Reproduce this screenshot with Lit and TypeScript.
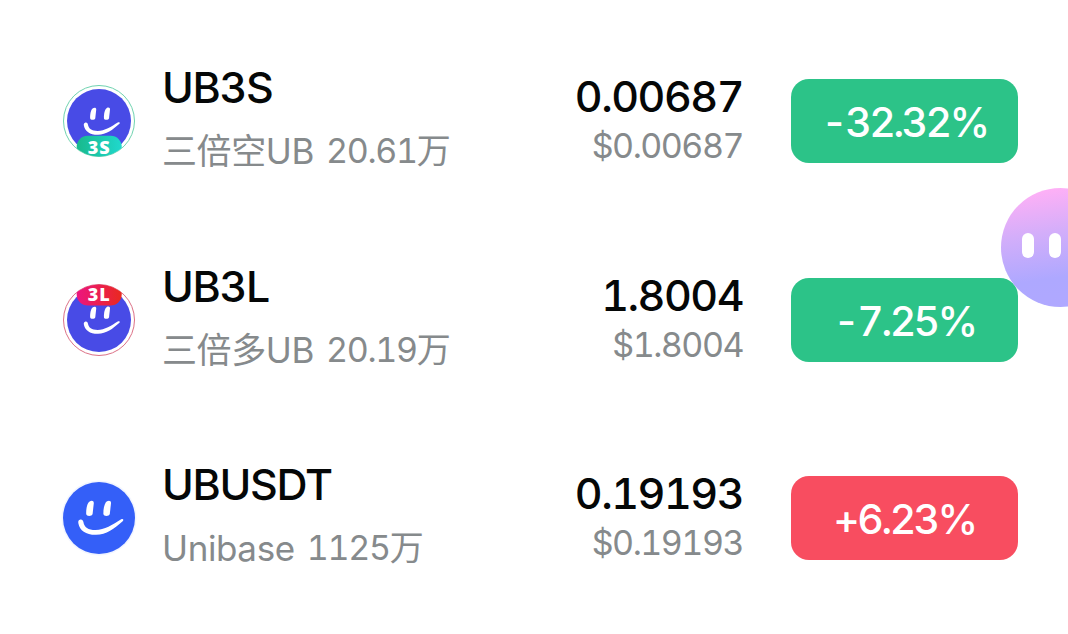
import { LitElement, html, css, svg, nothing } from 'lit';
import { customElement, property } from 'lit/decorators.js';
import { classMap } from 'lit/directives/class-map.js';

type Badge = 'short' | 'long' | '';

interface Ticker {
  symbol: string;
  name: string;
  volume: string;
  price: string;
  usd: string;
  change: string;
  badge: Badge;
}

const TICKERS: Ticker[] = [
  { symbol: 'UB3S', name: '三倍空UB', volume: '20.61万', price: '0.00687', usd: '$0.00687', change: '-32.32%', badge: 'short' },
  { symbol: 'UB3L', name: '三倍多UB', volume: '20.19万', price: '1.8004', usd: '$1.8004', change: '-7.25%', badge: 'long' },
  { symbol: 'UBUSDT', name: 'Unibase', volume: '1125万', price: '0.19193', usd: '$0.19193', change: '+6.23%', badge: '' }
];

@customElement('coin-icon')
export class CoinIcon extends LitElement {
  @property({ type: String }) badge: Badge = '';

  static styles = css`
    :host {
      display: block;
      width: 76px;
      height: 76px;
    }

    svg {
      display: block;
    }

    text {
      font-family: "Open Sans", "Noto Sans", sans-serif;
      font-size: 18px;
      font-weight: 800;
      letter-spacing: 1px;
    }
  `;

  private renderFace() {
    return svg`
      <g fill="#fff">
        <path d="M28.6 21.6C30.6 20.2 33 20.8 32.8 23.2L31.6 34C31.2 36.4 25.4 36.8 25.2 34C25 29 26 23.4 28.6 21.6Z" />
        <path d="M46 21.2C48.2 20 50.2 20.8 50 23.2L48.8 34C48.4 36.4 42.6 36.8 42.4 34C42.2 29 43.4 22.8 46 21.2Z" />
        <path d="M18.8 39.8C20.6 39 22 40 22.4 42C23.4 47.4 27 50 34.6 50C43.4 50 51.6 44.6 60.2 39.2C62.4 38.2 63 40 61.4 41.4C53.4 48.6 45 55 34.6 54.8C24.6 54.6 18.8 50.4 17.4 43.4C17 41.6 17.4 40.4 18.8 39.8Z" />
      </g>
    `;
  }

  private renderBadge() {
    const isShort = this.badge === 'short';
    return svg`
      <g clip-path="url(#disc)">
        <rect x="15.7" y="${isShort ? 52.7 : -5}" width="45" height="28.5" rx="11" fill="url(#${this.badge}-grad)" />
      </g>
      <text x="38.2" y="${isShort ? 71 : 19.2}" text-anchor="middle" fill="#fff">${isShort ? '3S' : '3L'}</text>
    `;
  }

  render() {
    const leveraged = this.badge !== '';
    return html`
      <svg width="76" height="76" viewBox="0 0 76 76">
        <defs>
          <clipPath id="disc"><circle cx="38" cy="38" r="35.5" /></clipPath>
          <linearGradient id="short-grad">
            <stop offset="0%" stop-color="#18b98c" />
            <stop offset="100%" stop-color="#20d8cd" />
          </linearGradient>
          <linearGradient id="long-grad">
            <stop offset="0%" stop-color="#ec1580" />
            <stop offset="100%" stop-color="#e9291f" />
          </linearGradient>
        </defs>
        ${leveraged ? svg`
          <circle cx="38" cy="38" r="35.5" fill="#fff" stroke="${this.badge === 'short' ? '#6fd3b0' : '#dc7187'}" stroke-width="1" />
          <circle cx="38" cy="38" r="32" fill="#484be6" />
          <g transform="translate(9 8) scale(0.8)">${this.renderFace()}</g>
          ${this.renderBadge()}
        ` : svg`
          <circle cx="38" cy="38" r="37.5" fill="#f1f5ff" />
          <circle cx="38" cy="38" r="36" fill="#345ff8" />
          ${this.renderFace()}
        `}
      </svg>
    `;
  }
}

@customElement('ticker-row')
export class TickerRow extends LitElement {
  @property({ type: Object }) ticker?: Ticker;

  static styles = css`
    :host {
      display: flex;
      align-items: center;
      height: 198.33px;
      padding: 0 50px 0 61px;
      box-sizing: border-box;
      font-family: Inter, "Liberation Sans", "Noto Sans CJK SC", sans-serif;
      font-variant-numeric: tabular-nums;
      white-space: nowrap;
    }

    .info {
      flex: 1;
      padding: 0 0 4.5px 25px;
    }

    .symbol {
      font-size: 43px;
      font-weight: 500;
      line-height: 64px;
      letter-spacing: -1.3px;
      color: #050707;
    }

    .detail {
      display: flex;
      gap: 12px;
      line-height: 64px;
      color: #868a8c;
    }

    .name {
      font-size: 35px;
      letter-spacing: -0.4px;
    }

    .volume {
      font-size: 34px;
      letter-spacing: -1.3px;
    }

    .prices {
      text-align: right;
      line-height: 49px;
      padding-right: 48px;
    }

    .price {
      font-size: 43px;
      font-weight: 500;
      letter-spacing: -1.5px;
      color: #050707;
    }

    .usd {
      font-size: 34px;
      letter-spacing: -1.5px;
      color: #868a8c;
    }

    .change {
      width: 227px;
      height: 84px;
      border-radius: 18px;
      background: #2cc388;
      color: #fff;
      font-size: 41px;
      font-weight: 500;
      line-height: 86px;
      letter-spacing: -2.6px;
      text-align: center;
    }

    .change.up {
      background: #f84d60;
    }
  `;

  render() {
    const t = this.ticker;
    if (!t) return nothing;
    return html`
      <coin-icon .badge=${t.badge}></coin-icon>
      <div class="info">
        <div class="symbol">${t.symbol}</div>
        <div class="detail">
          <span class="name">${t.name}</span>
          <span class="volume">${t.volume}</span>
        </div>
      </div>
      <div class="prices">
        <div class="price">${t.price}</div>
        <div class="usd">${t.usd}</div>
      </div>
      <div class=${classMap({ change: true, up: t.change.startsWith('+') })}>${t.change}</div>
    `;
  }
}

@customElement('app-root')
export class AppRoot extends LitElement {
  static styles = css`
    :host {
      display: block;
      position: relative;
      height: 634px;
      padding-top: 22.3px;
      box-sizing: border-box;
      overflow: hidden;
      background: #fff;
    }

    /* Floating assistant, half tucked behind the right edge */
    .assistant {
      position: absolute;
      top: 187.5px;
      right: -52px;
      display: flex;
      align-items: center;
      gap: 15px;
      width: 119.5px;
      height: 119.5px;
      padding: 0 0 3px 21.5px;
      box-sizing: border-box;
      border-radius: 50%;
      background: linear-gradient(172deg, #ffb0f6 5%, #d3aefa 38%, #aea8ff 72%, #b0a8ff 100%);
    }

    .eye {
      width: 12px;
      height: 25px;
      border-radius: 6px;
      background: #fff;
    }
  `;

  render() {
    return html`
      ${TICKERS.map(t => html`<ticker-row .ticker=${t}></ticker-row>`)}
      <div class="assistant">
        <div class="eye"></div>
        <div class="eye"></div>
      </div>
    `;
  }
}

declare global {
  interface HTMLElementTagNameMap {
    'app-root': AppRoot;
    'ticker-row': TickerRow;
    'coin-icon': CoinIcon;
  }
}
